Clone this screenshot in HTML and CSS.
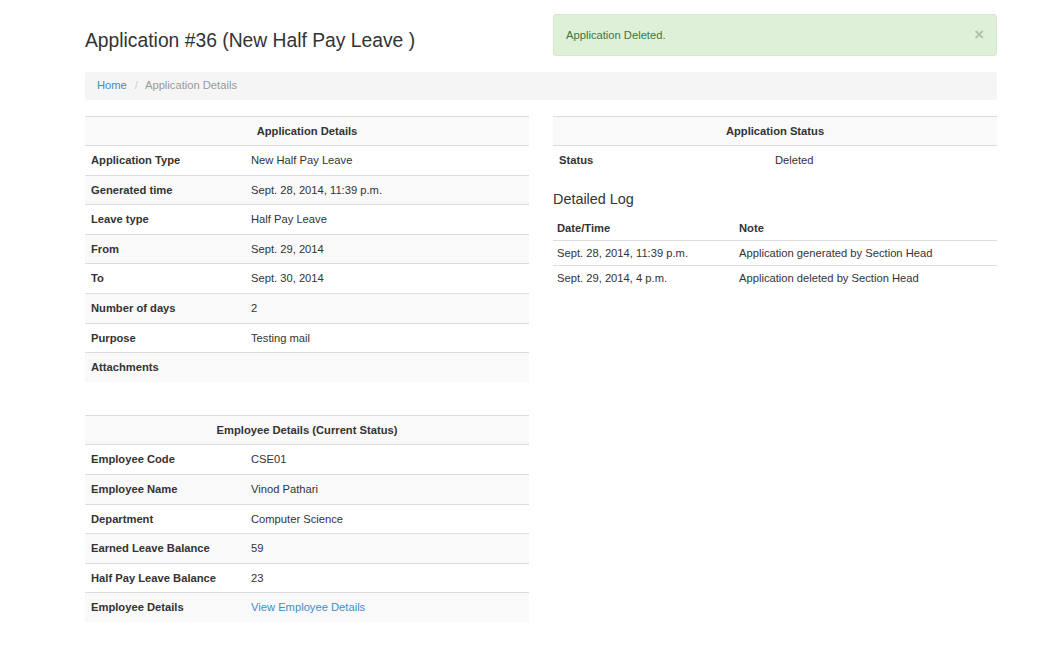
FILE: index.html
```html
<!DOCTYPE html>
<html lang="en">
<head>
<meta charset="utf-8">
<title>Application #36</title>
<link rel="stylesheet" href="styles.css">
</head>
<body>
<div class="page">
  <div class="row">
    <div class="col">
      <h3 class="title">Application #36 (New Half Pay Leave )</h3>
    </div>
    <div class="col">
      <div class="alert">Application Deleted.<span class="close">&times;</span></div>
    </div>
  </div>

  <ol class="breadcrumb">
    <li><a href="#">Home</a></li>
    <li class="active">Application Details</li>
  </ol>

  <div class="row">
    <div class="col stack">
      <table class="table striped details">
        <tr><th colspan="2" class="caption">Application Details</th></tr>
        <tr><th>Application Type</th><td>New Half Pay Leave</td></tr>
        <tr><th>Generated time</th><td>Sept. 28, 2014, 11:39 p.m.</td></tr>
        <tr><th>Leave type</th><td>Half Pay Leave</td></tr>
        <tr><th>From</th><td>Sept. 29, 2014</td></tr>
        <tr><th>To</th><td>Sept. 30, 2014</td></tr>
        <tr><th>Number of days</th><td>2</td></tr>
        <tr><th>Purpose</th><td>Testing mail</td></tr>
        <tr><th>Attachments</th><td></td></tr>
      </table>

      <table class="table striped details">
        <tr><th colspan="2" class="caption">Employee Details (Current Status)</th></tr>
        <tr><th>Employee Code</th><td>CSE01</td></tr>
        <tr><th>Employee Name</th><td>Vinod Pathari</td></tr>
        <tr><th>Department</th><td>Computer Science</td></tr>
        <tr><th>Earned Leave Balance</th><td>59</td></tr>
        <tr><th>Half Pay Leave Balance</th><td>23</td></tr>
        <tr><th>Employee Details</th><td><a href="#">View Employee Details</a></td></tr>
      </table>
    </div>

    <div class="col">
      <table class="table striped status">
        <tr><th colspan="2" class="caption">Application Status</th></tr>
        <tr><th>Status</th><td>Deleted</td></tr>
      </table>

      <h4 class="subhead">Detailed Log</h4>

      <table class="table condensed log">
        <thead>
          <tr><th>Date/Time</th><th>Note</th></tr>
        </thead>
        <tbody>
          <tr><td>Sept. 28, 2014, 11:39 p.m.</td><td>Application generated by Section Head</td></tr>
          <tr><td>Sept. 29, 2014, 4 p.m.</td><td>Application deleted by Section Head</td></tr>
        </tbody>
      </table>
    </div>
  </div>
</div>
</body>
</html>
```

FILE: styles.css
```css
* { box-sizing: border-box; }

html, body {
  margin: 0;
  padding: 0;
  background: #fff;
}

body {
  font-family: "Liberation Sans", Arial, Helvetica, sans-serif;
  font-size: 11.2px;
  line-height: 1.42857;
  color: #333;
}

a {
  color: #428bca;
  text-decoration: none;
}

.page {
  width: 912px;
  margin-left: 85px;
  padding-top: 14px;
}

.row {
  display: grid;
  grid-template-columns: 444px 444px;
  column-gap: 24px;
  align-items: start;
}

.title {
  margin: 16px 0 0;
  font-size: 19.3px;
  font-weight: 500;
  line-height: 1.1;
  color: #333;
}

.alert {
  position: relative;
  padding: 11.5px 12px 12.5px;
  margin-bottom: 16px;
  line-height: 16px;
  background: #dff0d8;
  border: 1px solid #d6e9c6;
  border-radius: 3px;
  color: #3c763d;
}

.close {
  position: absolute;
  right: 12px;
  top: 12px;
  font-size: 16.8px;
  font-weight: bold;
  line-height: 16px;
  color: #000;
  opacity: 0.2;
}

.breadcrumb {
  list-style: none;
  margin: 0 0 16px;
  padding: 6px 12px;
  line-height: 15.5px;
  background: #f5f5f5;
  border-radius: 3px;
  display: flex;
}

.breadcrumb li.active { color: #999; }

.breadcrumb li + li::before {
  content: "/";
  color: #ccc;
  padding: 0 7px 0 8px;
}

.stack {
  display: flex;
  flex-direction: column;
  gap: 33px;
}

.table {
  width: 100%;
  border-collapse: collapse;
  border-spacing: 0;
}

.table th,
.table td {
  padding: 6px 6px;
  line-height: 16.6px;
  text-align: left;
  vertical-align: top;
  border-top: 1px solid #ddd;
}

.table th { font-weight: bold; }

.table th.caption { text-align: center; }

.striped tr:nth-child(odd) > th,
.striped tr:nth-child(odd) > td {
  background: #f9f9f9;
}

.details th:first-child { width: 160px; }
.status th:first-child { width: 216px; }

.subhead {
  margin: 17px 0 8px;
  font-size: 14.4px;
  font-weight: 500;
  line-height: 1.1;
}

.condensed th,
.condensed td {
  padding: 4px;
  line-height: 16px;
}

.log thead th {
  border-top: 0;
  border-bottom: 1px solid #ddd;
}

.log th:first-child { width: 182px; }
```
